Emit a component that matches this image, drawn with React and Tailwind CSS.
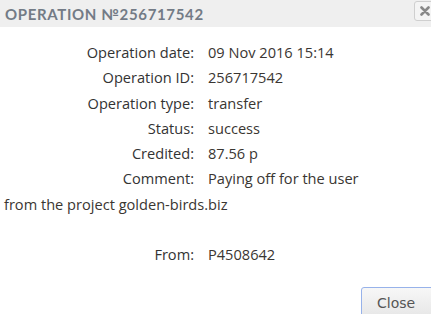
export default function App() {
  const rows = [
    ["Operation date:", "09 Nov 2016 15:14"],
    ["Operation ID:", "256717542"],
    ["Operation type:", "transfer"],
    ["Status:", "success"],
    ["Credited:", "87.56 p"],
  ];
  const label = "inline-block w-[190px] text-right text-[#333]";
  const val = "ml-[14px] text-[#3a3632]";
  return (
    <div className="w-[431px] h-[314px] overflow-hidden bg-white relative" style={{ fontFamily: "'Open Sans', Inter, sans-serif" }}>
      <div className="h-[27px] bg-[#efefef] flex items-center justify-between pl-[5px]">
        <div className="text-[15px] font-bold tracking-[0.65px] text-[#737b86] leading-none pt-[1px]" style={{ fontFamily: "Lato, 'DejaVu Sans', sans-serif" }}>
          OPERATION №256717542
        </div>
        <div className="self-start mt-[1px] -mr-[6px] w-[23px] h-[20px] border border-[#cfcfcf] rounded-[3px] bg-[#f4f4f4] flex items-center justify-start pl-[5px]">
          <svg width="10" height="10" viewBox="0 0 10 10">
            <path d="M1.5 1.5 L8.5 8.5 M8.5 1.5 L1.5 8.5" stroke="#888" strokeWidth="2.6" strokeLinecap="round" />
          </svg>
        </div>
      </div>
      <div className="pt-[13px] pl-[4px] text-[14.6px] leading-[25.3px]">
        {rows.map(([l, v]) => (
          <div key={l}>
            <span className={label}>{l}</span>
            <span className={val}>{v}</span>
          </div>
        ))}
        <div>
          <span className={label}>Comment:</span>
          <span className={val}>Paying off for the user</span>
          <br />
          <span className="text-[#3a3632]">from the project golden-birds.biz</span>
        </div>
        <div className="h-[25.3px]" />
        <div>
          <span className={label}>From:</span>
          <span className={val}>P4508642</span>
        </div>
      </div>
      <div className="absolute left-[361px] top-[287px] w-[74px] h-[32px] border border-[#97b2ea] rounded-[3px] bg-gradient-to-b from-[#f7f7f7] to-[#e6e6e6] flex items-center justify-start pl-[15px] text-[14px] text-[#555]" style={{ fontFamily: "'DejaVu Sans', Verdana, sans-serif" }}>
        Close
      </div>
    </div>
  );
}
